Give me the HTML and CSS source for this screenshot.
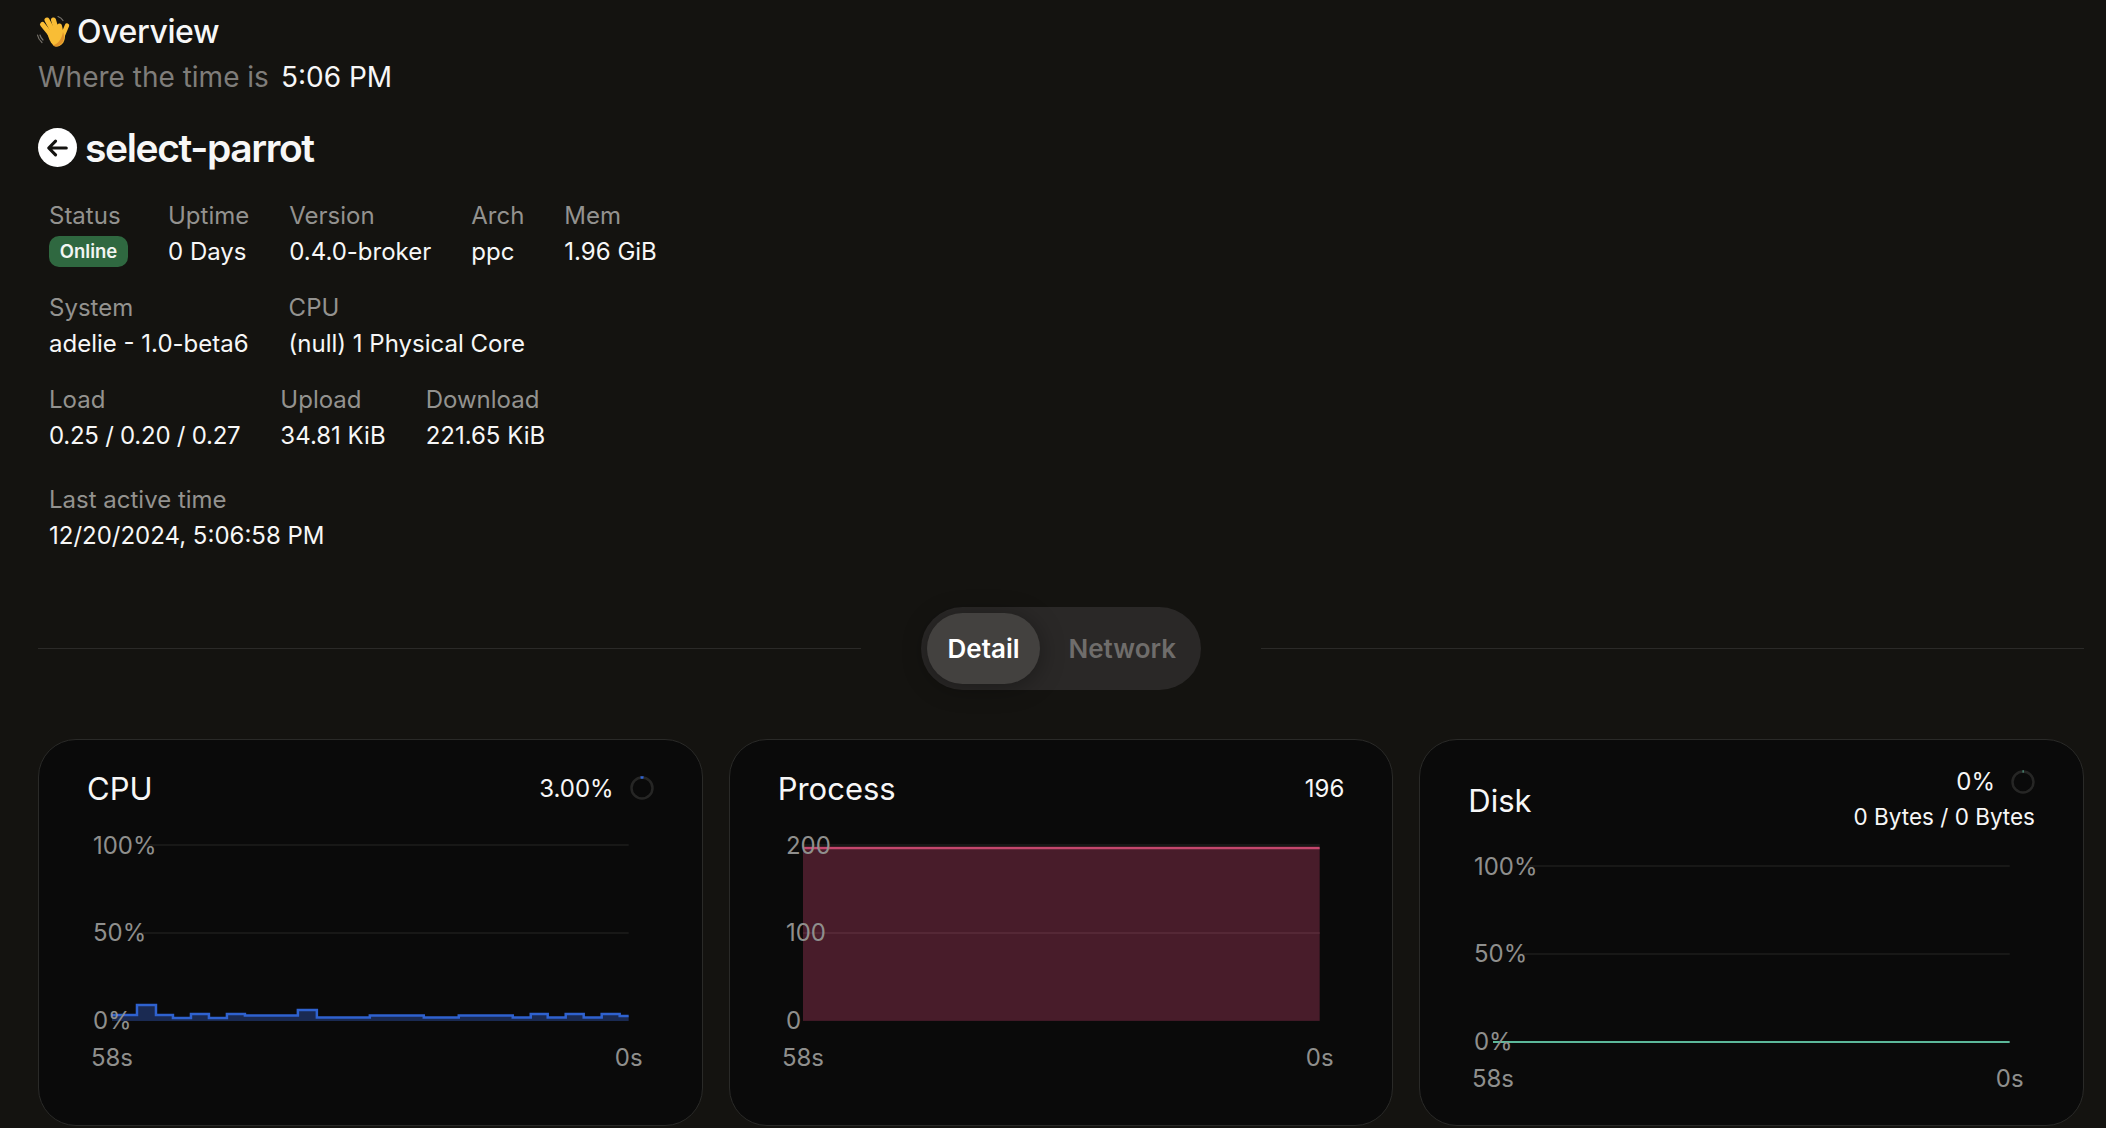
FILE: index.html
```html
<!DOCTYPE html>
<html lang="en">
<head>
    <meta charset="UTF-8">
    <meta name="viewport" content="width=device-width, initial-scale=1.0">
    <title>select-parrot - Overview</title>
    <link rel="stylesheet" href="styles.css">
</head>
<body>
    <main class="page">
        <header class="greeting">
            <h2 class="greeting-title">
                <svg class="wave" viewBox="0 0 34 34" width="34" height="34" aria-hidden="true">
                    <g fill="none" stroke="#77736c" stroke-width="1.2" stroke-linecap="round">
                        <path d="M1.5 20c.6 3 2 5.500 4.500 7.500"/>
                        <path d="M4 20c.5 2 1.500 3.800 3 5"/>
                        <path d="M22 1.500c2.500 .8 4 2.200 5 4"/>
                    </g>
                    <g fill="none" stroke="#f9bd35" stroke-width="5" stroke-linecap="round">
                        <line x1="6.500" y1="9.500" x2="15" y2="20"/>
                        <line x1="11" y1="5" x2="18" y2="18"/>
                        <line x1="17.500" y1="5" x2="21" y2="17"/>
                        <line x1="23.500" y1="11" x2="25" y2="18"/>
                        <line x1="31" y1="10.500" x2="27" y2="20" stroke-width="4.500"/>
                    </g>
                    <path d="M11 17c3-3 14-4 17-1 2 5 1 11-3 14-3 2-6 2-8 0-3-3-5-8-6-13z" fill="#f9bd35"/>
                    <path d="M27 17c2 5 1 10-3 13-3 2-5 2-7 0 4 0 9-6 10-13z" fill="#e0922a"/>
                </svg>
                Overview
            </h2>
            <p class="clock"><span class="clock-label">Where the time is</span> <span class="clock-value">5:06 PM</span></p>
        </header>

        <section class="server">
            <div class="server-name">
                <span class="back-btn">
                    <svg viewBox="0 0 40 40" width="39" height="39" aria-hidden="true">
                        <path d="M29 20.500H11.500M18 13.500l-7 7 7 7" fill="none" stroke="#141310" stroke-width="3.200" stroke-linecap="round" stroke-linejoin="round"/>
                    </svg>
                </span>
                <h1>select-parrot</h1>
            </div>

            <div class="stat-row">
                <div class="stat"><span class="stat-label">Status</span><span class="badge">Online</span></div>
                <div class="stat"><span class="stat-label">Uptime</span><span class="stat-value">0 Days</span></div>
                <div class="stat"><span class="stat-label">Version</span><span class="stat-value">0.4.0-broker</span></div>
                <div class="stat"><span class="stat-label">Arch</span><span class="stat-value">ppc</span></div>
                <div class="stat"><span class="stat-label">Mem</span><span class="stat-value">1.96 GiB</span></div>
            </div>
            <div class="stat-row">
                <div class="stat"><span class="stat-label">System</span><span class="stat-value">adelie - 1.0-beta6</span></div>
                <div class="stat"><span class="stat-label">CPU</span><span class="stat-value">(null) 1 Physical Core</span></div>
            </div>
            <div class="stat-row">
                <div class="stat"><span class="stat-label">Load</span><span class="stat-value stat-value-tight">0.25 / 0.20 / 0.27</span></div>
                <div class="stat"><span class="stat-label">Upload</span><span class="stat-value">34.81 KiB</span></div>
                <div class="stat"><span class="stat-label">Download</span><span class="stat-value">221.65 KiB</span></div>
            </div>
            <div class="stat-row stat-row-last">
                <div class="stat"><span class="stat-label">Last active time</span><span class="stat-value">12/20/2024, 5:06:58 PM</span></div>
            </div>
        </section>

        <div class="tabs-divider">
            <span class="divider-line"></span>
            <div class="tabs">
                <span class="tab tab-active">Detail</span>
                <span class="tab">Network</span>
            </div>
            <span class="divider-line"></span>
        </div>

        <section class="cards">
            <article class="card">
                <div class="card-head">
                    <h3 class="card-title">CPU</h3>
                    <div class="metric">
                        <span>3.00%</span>
                        <svg class="ring" viewBox="0 0 24 24" width="24" height="24" aria-hidden="true">
                            <circle class="ring-track" cx="12" cy="12" r="10.500"/>
                            <circle class="ring-value" cx="12" cy="12" r="10.500" stroke="#2f62cf" stroke-dasharray="3 63" transform="rotate(-98 12 12)"/>
                        </svg>
                    </div>
                </div>
                <svg class="chart" viewBox="0 0 567 245" aria-hidden="true">
                    <line class="grid" x1="58" y1="14" x2="542" y2="14"/>
                    <line class="grid" x1="50" y1="102" x2="542" y2="102"/>
                    <path d="M25 190V184H50V174H69V184H86V187H104V183H122V187H140V183H158V184.500H211V179H230V186.500H283V184.500H337V186.500H372V184.500H426V186.500H444V183H461V186.500H479V183H497V186.500H515V183H533V185H542V190Z" fill="#1a2a52"/>
                    <path d="M25 184H50V174H69V184H86V187H104V183H122V187H140V183H158V184.500H211V179H230V186.500H283V184.500H337V186.500H372V184.500H426V186.500H444V183H461V186.500H479V183H497V186.500H515V183H533V185H542" fill="none" stroke="#2f62cf" stroke-width="2.500"/>
                    <text class="tick" x="6" y="23">100%</text>
                    <text class="tick" x="6" y="110">50%</text>
                    <text class="tick" x="6" y="198">0%</text>
                    <text class="tick tick-mid" x="25" y="235">58s</text>
                    <text class="tick tick-mid" x="542" y="235">0s</text>
                </svg>
            </article>

            <article class="card">
                <div class="card-head">
                    <h3 class="card-title">Process</h3>
                    <div class="metric"><span>196</span></div>
                </div>
                <svg class="chart" viewBox="0 0 567 245" aria-hidden="true">
                    <line class="grid" x1="25" y1="14" x2="542" y2="14"/>
                    <rect x="25" y="17" width="517" height="173" fill="#481c2a"/>
                    <line class="grid-tint" x1="25" y1="102" x2="542" y2="102"/>
                    <line x1="25" y1="17" x2="542" y2="17" stroke="#c4486e" stroke-width="2.500"/>
                    <text class="tick" x="8" y="23">200</text>
                    <text class="tick" x="8" y="110">100</text>
                    <text class="tick" x="8" y="198">0</text>
                    <text class="tick tick-mid" x="25" y="235">58s</text>
                    <text class="tick tick-mid" x="542" y="235">0s</text>
                </svg>
            </article>

            <article class="card">
                <div class="card-head card-head-tall">
                    <h3 class="card-title">Disk</h3>
                    <div class="metric-stack">
                        <div class="metric">
                            <span>0%</span>
                            <svg class="ring" viewBox="0 0 24 24" width="24" height="24" aria-hidden="true">
                                <circle class="ring-track" cx="12" cy="12" r="10.500"/>
                                <circle class="ring-value" cx="12" cy="12" r="10.500" stroke="#5cb89a" stroke-dasharray="1 65" transform="rotate(-92 12 12)"/>
                            </svg>
                        </div>
                        <span class="metric-sub">0 Bytes / 0 Bytes</span>
                    </div>
                </div>
                <svg class="chart" viewBox="0 0 567 245" aria-hidden="true">
                    <line class="grid" x1="58" y1="14" x2="542" y2="14"/>
                    <line class="grid" x1="50" y1="102" x2="542" y2="102"/>
                    <line x1="25" y1="190" x2="542" y2="190" stroke="#5cb89a" stroke-width="2"/>
                    <text class="tick" x="6" y="23">100%</text>
                    <text class="tick" x="6" y="110">50%</text>
                    <text class="tick" x="6" y="198">0%</text>
                    <text class="tick tick-mid" x="25" y="235">58s</text>
                    <text class="tick tick-mid" x="542" y="235">0s</text>
                </svg>
            </article>
        </section>
    </main>
</body>
</html>
```

FILE: styles.css
```css
/* Dashboard, dark theme */
body {
    margin: 0;
    background-color: #141310;
    color: #f7f7f7;
    font-family: Inter, "Noto Sans", sans-serif;
    overflow: hidden;
}

.page {
    height: 1128px;
    box-sizing: border-box;
    padding: 14px 22px 0 38px;
}

/* Greeting */
.greeting-title {
    display: flex;
    align-items: center;
    gap: 7px;
    margin: 0;
    margin-left: -2px;
    font-size: 32px;
    font-weight: 500;
    line-height: 36px;
    letter-spacing: -0.4px;
}

.clock {
    display: flex;
    gap: 12px;
    margin: 9px 0 0;
    font-size: 28px;
    line-height: 36px;
}

.clock-label {
    color: #7f7d7a;
}

/* Server details */
.server {
    margin-top: 32px;
}

.server-name {
    display: flex;
    align-items: center;
    gap: 8px;
    height: 40px;
}

.server-name h1 {
    margin: 2px 0 0;
    font-size: 39px;
    font-weight: 600;
    letter-spacing: -1.4px;
    line-height: 40px;
}

.back-btn {
    display: flex;
    width: 39px;
    height: 39px;
    border-radius: 50%;
    background-color: #ffffff;
}

.stat-row {
    display: flex;
    gap: 40px;
    margin: 20px 0 0 11px;
}

.server-name + .stat-row {
    margin-top: 31px;
}

.stat-row-last {
    margin-top: 28px;
}

.stat {
    display: flex;
    flex-direction: column;
    font-size: 24px;
    line-height: 36px;
}

.stat-label {
    color: #93928f;
}

.stat-value {
    color: #f7f7f7;
}

.stat-value-tight {
    letter-spacing: -0.25px;
}

.badge {
    align-self: flex-start;
    box-sizing: border-box;
    width: 79px;
    height: 31px;
    margin-top: 2px;
    border-radius: 10px;
    background-color: #2f6840;
    color: #f2f5f2;
    font-size: 18.5px;
    font-weight: 600;
    line-height: 31px;
    text-align: center;
}

/* Tabs */
.tabs-divider {
    display: flex;
    align-items: center;
    gap: 60px;
    margin-top: 53px;
}

.divider-line {
    flex: 1;
    height: 1px;
    background-color: #2b2a28;
}

.tabs {
    display: flex;
    gap: 8px;
    box-sizing: border-box;
    width: 280px;
    height: 83px;
    padding: 6px;
    border-radius: 42px;
    background-color: #2a2827;
}

.tab {
    display: flex;
    align-items: center;
    justify-content: center;
    height: 71px;
    padding: 0 20.5px;
    border-radius: 36px;
    color: #6f6d6b;
    font-size: 26px;
    font-weight: 600;
}

.tab-active {
    background-color: #43413f;
    box-shadow: 0 3px 24px rgba(0, 0, 0, 0.35);
    color: #ffffff;
}

/* Cards */
.cards {
    display: grid;
    grid-template-columns: repeat(3, 1fr);
    gap: 26px;
    margin-top: 49px;
}

.card {
    box-sizing: border-box;
    height: 387px;
    padding: 28px 48px 0;
    border: 1px solid #2a2a28;
    border-radius: 38px;
    background-color: #0a0a0a;
}

.card-head {
    display: flex;
    align-items: center;
    justify-content: space-between;
    height: 40px;
    margin-bottom: 23px;
}

.card-head-tall {
    height: 64px;
    margin-bottom: 20px;
}

.card-title {
    margin: 0;
    font-size: 31px;
    font-weight: 400;
}

.metric {
    display: flex;
    align-items: center;
    gap: 16px;
    font-size: 24px;
}

.metric-stack {
    display: flex;
    flex-direction: column;
    align-items: flex-end;
    align-self: flex-start;
    margin-top: -1px;
}

.metric-sub {
    margin-top: 7px;
    font-size: 22.5px;
    line-height: 28px;
}

.ring {
    display: block;
}

.ring-track,
.ring-value {
    fill: none;
    stroke-width: 2.500;
}

.ring-track {
    stroke: #262625;
}

.chart {
    display: block;
    width: 100%;
    overflow: visible;
}

.grid {
    stroke: #1e1e1d;
    stroke-width: 1.500;
}

.grid-tint {
    stroke: #5a2c3b;
    stroke-width: 1.500;
}

.tick {
    fill: #8f8f8d;
    font-size: 24px;
}

.tick-mid {
    text-anchor: middle;
}
```
